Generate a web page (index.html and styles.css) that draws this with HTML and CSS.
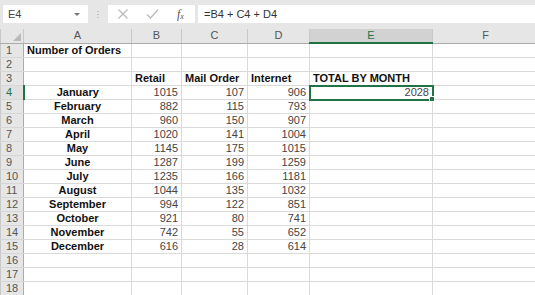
FILE: index.html
```html
<!DOCTYPE html>
<html lang="en">
<head>
  <meta charset="UTF-8" />
  <title>Number of Orders</title>
  <link rel="stylesheet" href="styles.css">
</head>
<body>
  <div class="sheet">
    <div class="formula-bar">
      <div class="name-box">
        <span>E4</span>
        <span class="caret"></span>
      </div>
      <div class="grip"><i></i><i></i><i></i></div>
      <div class="fx-tools">
        <svg class="tool" width="12" height="12" viewBox="0 0 12 12"><path d="M1.5 1.5 L10.5 10.5 M10.5 1.5 L1.5 10.5" stroke="#b9b9b9" stroke-width="1.2" fill="none"/></svg>
        <svg class="tool" width="13" height="12" viewBox="0 0 13 12"><path d="M1 6.5 L4.5 10 L12 1.5" stroke="#b9b9b9" stroke-width="1.2" fill="none"/></svg>
        <span class="fx">f<sub>x</sub></span>
      </div>
      <div class="formula-input">=B4 + C4 + D4</div>
    </div>

    <table class="grid">
      <colgroup>
        <col class="c-row"><col class="c-a"><col class="c-b"><col class="c-c"><col class="c-d"><col class="c-e"><col class="c-f">
      </colgroup>
      <thead>
        <tr>
          <th class="corner"><span class="tri"></span></th>
          <th>A</th><th>B</th><th>C</th><th>D</th><th class="sel">E</th><th>F</th>
        </tr>
      </thead>
      <tbody>
        <tr><th>1</th><td class="title">Number of Orders</td><td></td><td></td><td></td><td></td><td></td></tr>
        <tr><th>2</th><td></td><td></td><td></td><td></td><td></td><td></td></tr>
        <tr><th>3</th><td></td><td class="head">Retail</td><td class="head">Mail Order</td><td class="head">Internet</td><td class="head">TOTAL BY MONTH</td><td></td></tr>
        <tr><th class="sel">4</th><td class="month">January</td><td class="num">1015</td><td class="num">107</td><td class="num">906</td><td class="num active">2028</td><td></td></tr>
        <tr><th>5</th><td class="month">February</td><td class="num">882</td><td class="num">115</td><td class="num">793</td><td></td><td></td></tr>
        <tr><th>6</th><td class="month">March</td><td class="num">960</td><td class="num">150</td><td class="num">907</td><td></td><td></td></tr>
        <tr><th>7</th><td class="month">April</td><td class="num">1020</td><td class="num">141</td><td class="num">1004</td><td></td><td></td></tr>
        <tr><th>8</th><td class="month">May</td><td class="num">1145</td><td class="num">175</td><td class="num">1015</td><td></td><td></td></tr>
        <tr><th>9</th><td class="month">June</td><td class="num">1287</td><td class="num">199</td><td class="num">1259</td><td></td><td></td></tr>
        <tr><th>10</th><td class="month">July</td><td class="num">1235</td><td class="num">166</td><td class="num">1181</td><td></td><td></td></tr>
        <tr><th>11</th><td class="month">August</td><td class="num">1044</td><td class="num">135</td><td class="num">1032</td><td></td><td></td></tr>
        <tr><th>12</th><td class="month">September</td><td class="num">994</td><td class="num">122</td><td class="num">851</td><td></td><td></td></tr>
        <tr><th>13</th><td class="month">October</td><td class="num">921</td><td class="num">80</td><td class="num">741</td><td></td><td></td></tr>
        <tr><th>14</th><td class="month">November</td><td class="num">742</td><td class="num">55</td><td class="num">652</td><td></td><td></td></tr>
        <tr><th>15</th><td class="month">December</td><td class="num">616</td><td class="num">28</td><td class="num">614</td><td></td><td></td></tr>
        <tr><th>16</th><td></td><td></td><td></td><td></td><td></td><td></td></tr>
        <tr><th>17</th><td></td><td></td><td></td><td></td><td></td><td></td></tr>
        <tr><th>18</th><td></td><td></td><td></td><td></td><td></td><td></td></tr>
      </tbody>
    </table>
  </div>
</body>
</html>
```

FILE: styles.css
```css
/* --- BASE --- */
body {
  margin: 0;
  background: #ffffff;
  font-family: "Liberation Sans", Arial, sans-serif;
  color: #222;
}
.sheet {
  width: 535px;
  height: 295px;
  overflow: hidden;
  background: #e6e6e6;
}

/* --- FORMULA BAR --- */
.formula-bar {
  display: flex;
  align-items: stretch;
  height: 18px;
  padding: 5px 0 6px 3px;
}
.name-box {
  width: 85px;
  background: #fff;
  display: flex;
  align-items: center;
  justify-content: space-between;
  padding: 0 8px 0 5px;
  box-sizing: border-box;
  font-size: 11px;
  color: #444;
}
.caret {
  width: 0; height: 0;
  border-left: 3px solid transparent;
  border-right: 3px solid transparent;
  border-top: 3px solid #777;
}
.grip {
  width: 20px;
  display: flex;
  flex-direction: column;
  align-items: center;
  justify-content: center;
  gap: 2px;
}
.grip i { width: 2px; height: 1px; background: #c4c4c4; display: block; }
.fx-tools {
  width: 87px;
  background: #fff;
  display: flex;
  align-items: center;
  padding-left: 9px;
  box-sizing: border-box;
  gap: 17px;
}
.fx {
  font-family: "Liberation Serif", "Times New Roman", serif;
  font-style: italic;
  font-size: 12px;
  color: #555;
  margin-left: 1px;
}
.fx sub { font-size: 8px; vertical-align: -1px; }
.formula-input {
  flex: 1;
  margin-left: 3px;
  background: #fff;
  font-size: 11px;
  color: #333;
  line-height: 18px;
  padding-left: 6px;
}

/* --- GRID --- */
.grid {
  border-collapse: collapse;
  table-layout: fixed;
  width: 538px;
  background: #fff;
  font-size: 11px;
}
.c-row { width: 23px; }
.c-a { width: 108px; }
.c-b { width: 50px; }
.c-c { width: 66px; }
.c-d { width: 62px; }
.c-e { width: 123px; }
.c-f { width: 106px; }

.grid tr { height: 14px; }
.grid td, .grid th {
  height: 13px;
  padding: 0 3px;
  line-height: 13px;
  white-space: nowrap;
  overflow: visible;
}
.grid td { border: 1px solid #dadada; }
.grid th {
  background: #e6e6e6;
  font-weight: normal;
  color: #555;
  border: 1px solid #c8c8c8;
}
.grid thead th {
  text-align: center;
  border-bottom: 1px solid #ababab;
  border-top: none;
}
.grid tbody th {
  text-align: left;
  padding-left: 5px;
  border-right: 1px solid #ababab;
  border-top-color: #d6d6d6;
  border-bottom-color: #d6d6d6;
}
.grid .corner { position: relative; }
.tri {
  position: absolute;
  right: 2px; bottom: 2px;
  width: 0; height: 0;
  border-left: 8px solid transparent;
  border-bottom: 8px solid #b9b9b9;
}
.grid thead th.sel {
  background: #d2d2d2;
  color: #217346;
  border-bottom: 2px solid #217346;
}
.grid tbody th.sel {
  background: #e0e0e0;
  color: #217346;
  border-right: 2px solid #217346;
}

/* --- CELLS --- */
.title, .head, .month { font-weight: bold; color: #111; }
.month { text-align: center; }
.num { text-align: right; color: #444; }
.active {
  position: relative;
  outline: 2px solid #217346;
  outline-offset: -1px;
}
.active::after {
  content: "";
  position: absolute;
  right: -3px; bottom: -3px;
  width: 4px; height: 4px;
  background: #217346;
  border: 1px solid #fff;
}
```
